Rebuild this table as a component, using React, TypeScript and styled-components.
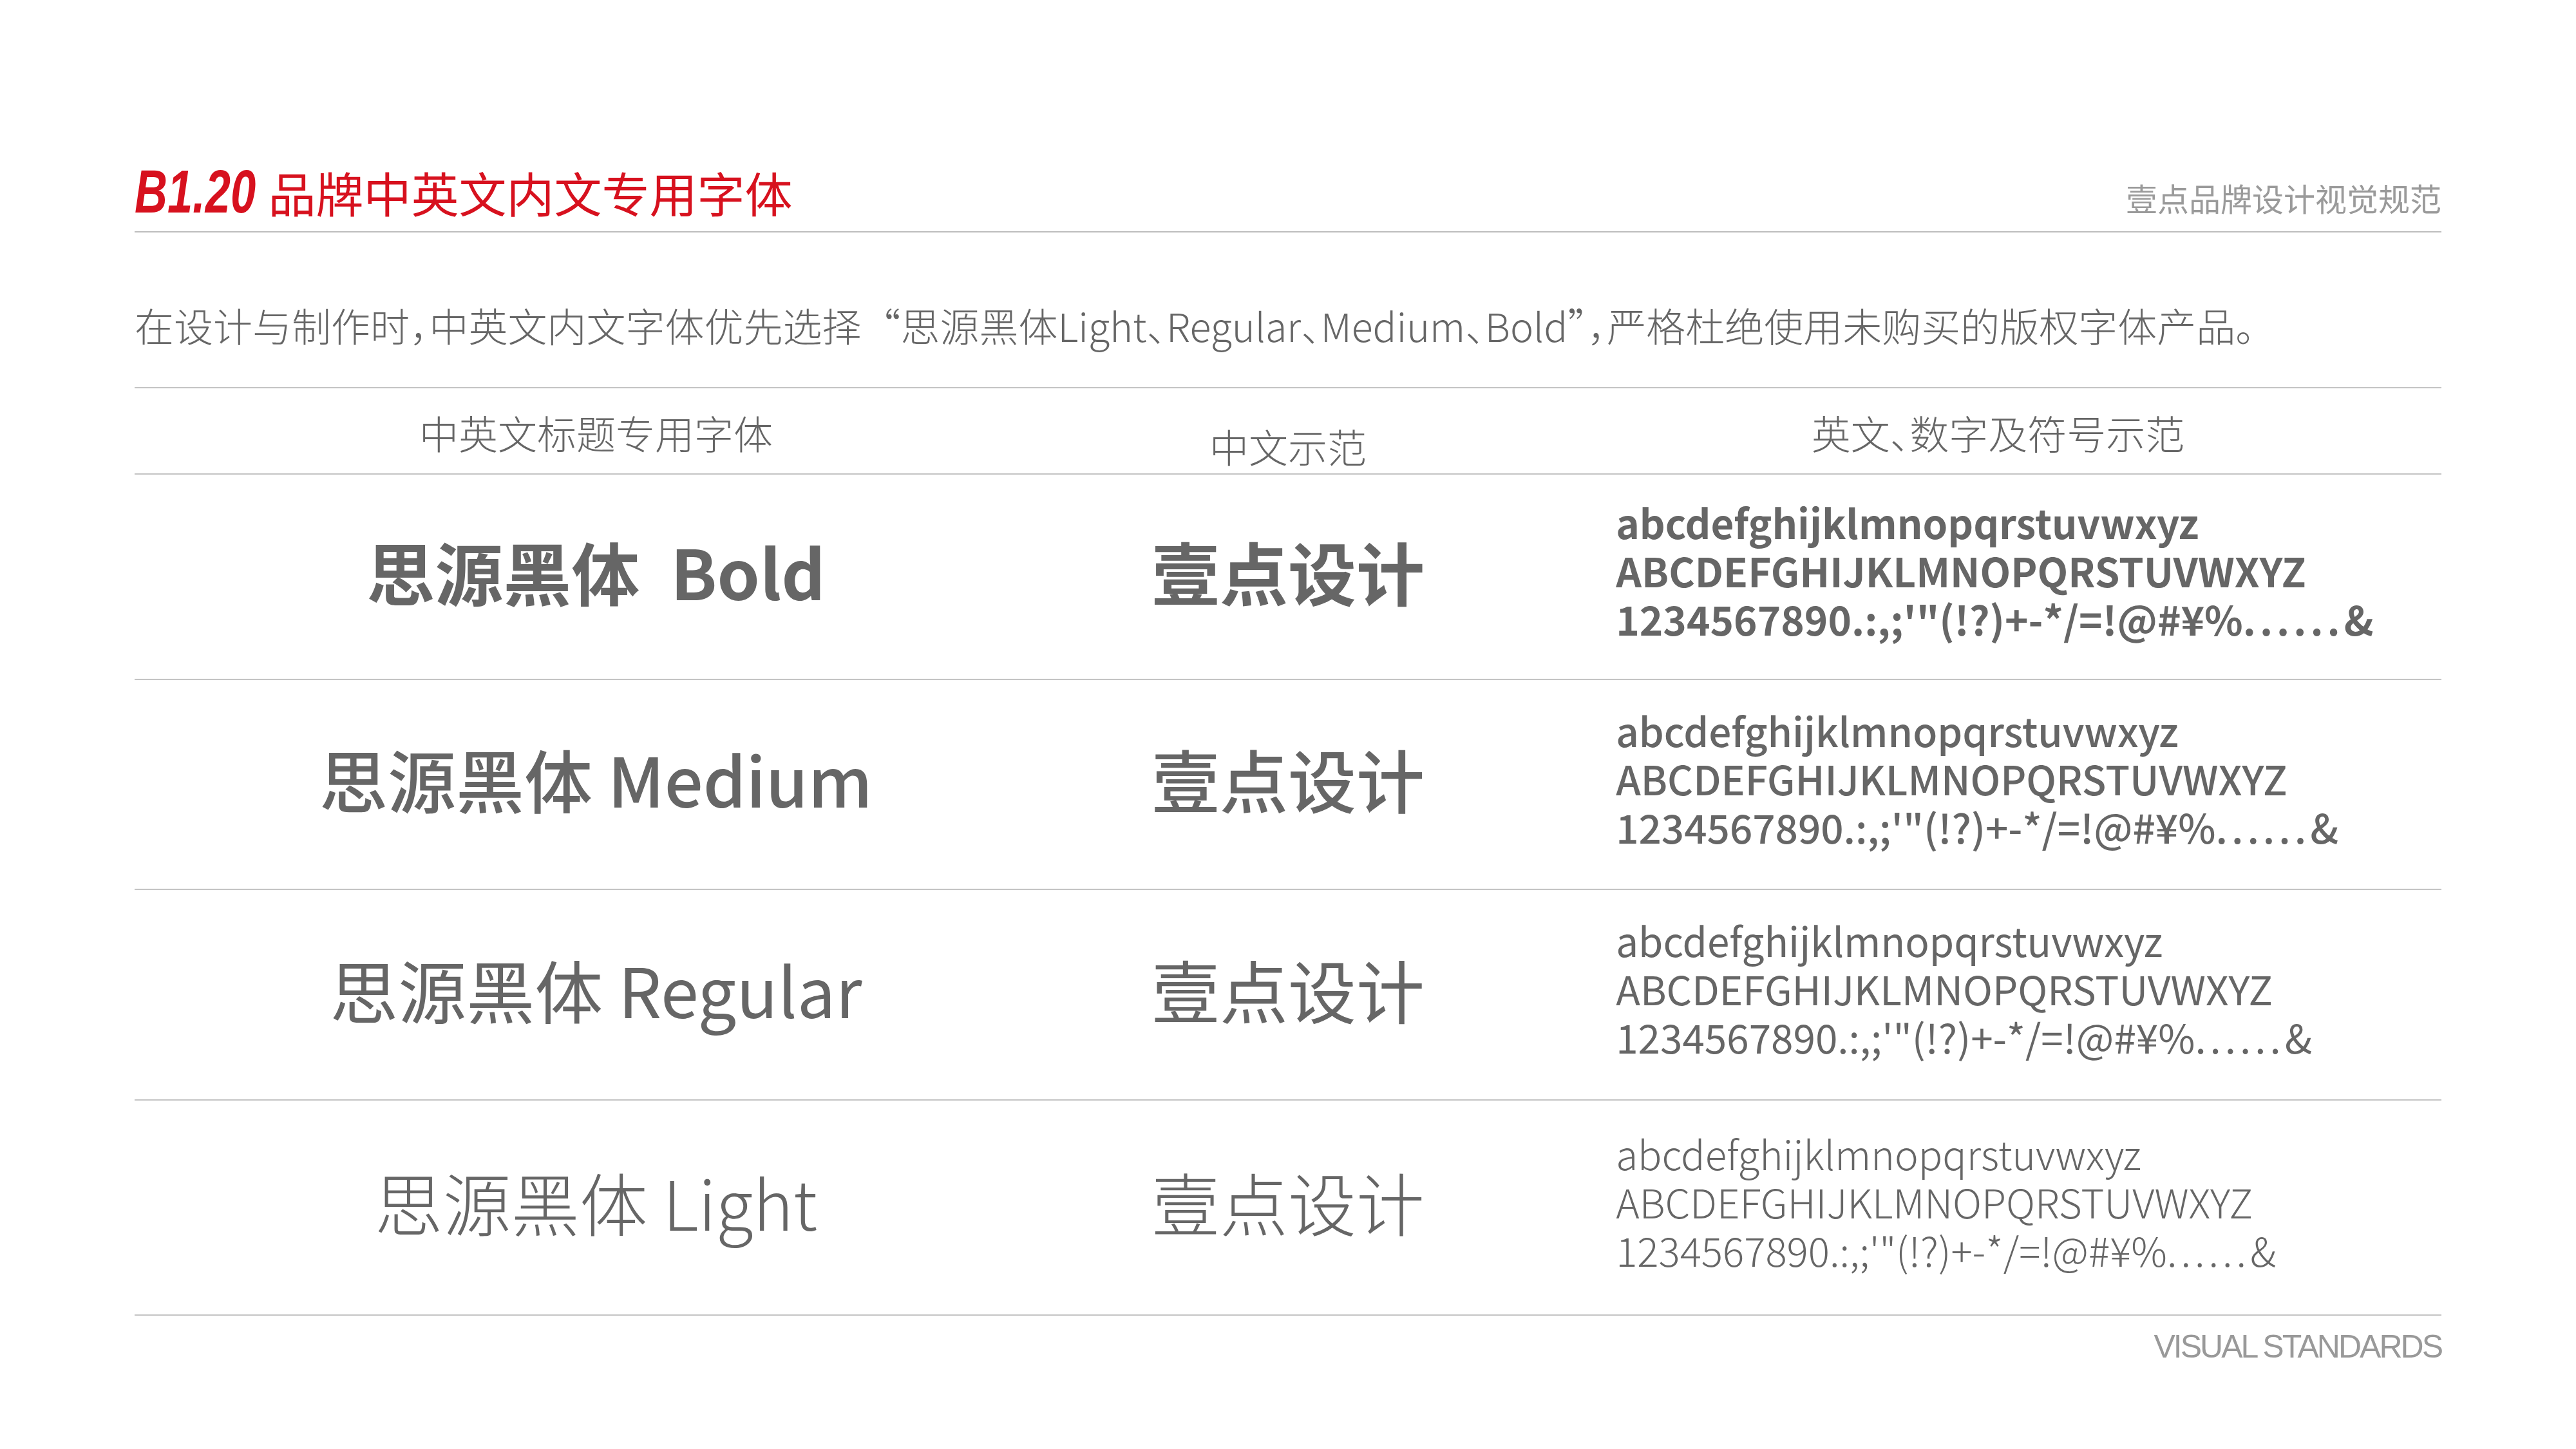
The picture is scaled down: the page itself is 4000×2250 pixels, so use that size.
import styled, { createGlobalStyle } from "styled-components";

const GlobalStyle = createGlobalStyle`
  html, body {
    margin: 0;
    padding: 0;
    background: #ffffff;
  }
  body {
    font-family: "Noto Sans CJK SC", "Noto Sans", sans-serif;
    color: #666666;
  }
`;

const rows = [
  { name: "思源黑体  Bold", weight: 700, height: 319 },
  { name: "思源黑体 Medium", weight: 500, height: 326 },
  { name: "思源黑体 Regular", weight: 400, height: 327 },
  { name: "思源黑体 Light", weight: 300, height: 334 },
];

const App = () => {
  return (
    <>
      <GlobalStyle />
      <Page>
        <Header>
          <TitleGroup>
            <Code>B1.20</Code>
            <Title>品牌中英文内文专用字体</Title>
          </TitleGroup>
          <Brand>壹点品牌设计视觉规范</Brand>
        </Header>

        <Intro>
          在设计与制作时，中英文内文字体优先选择<Quote>“</Quote>思源黑体Light、Regular、Medium、Bold<Quote>”</Quote>，严格杜绝使用未购买的版权字体产品。
        </Intro>

        <Table>
          <HeadRow>
            <HeadCell>中英文标题专用字体</HeadCell>
            <HeadCell $drop={21}>中文示范</HeadCell>
            <HeadCell $shift={56}>英文、数字及符号示范</HeadCell>
          </HeadRow>
          {rows.map((row) => (
            <Row key={row.name} $height={row.height}>
              <FontName $weight={row.weight}>{row.name}</FontName>
              <Sample $weight={row.weight}>壹点设计</Sample>
              <Glyphs $weight={row.weight}>
                <GlyphLine>abcdefghijklmnopqrstuvwxyz</GlyphLine>
                <GlyphLine>ABCDEFGHIJKLMNOPQRSTUVWXYZ</GlyphLine>
                <GlyphLine>
                  1234567890.:,;'"(!?)+-*/=!@#¥%<Dots>......</Dots>&amp;
                </GlyphLine>
              </Glyphs>
            </Row>
          ))}
        </Table>

        <Footer>VISUAL STANDARDS</Footer>
      </Page>
    </>
  );
};

const Page = styled.div`
  width: 4000px;
  height: 2250px;
  box-sizing: border-box;
  padding: 0 209px;
  background: #ffffff;
  display: flex;
  flex-direction: column;
`;

const Header = styled.header`
  height: 361px;
  box-sizing: border-box;
  border-bottom: 2px solid #bdbdbd;
  display: flex;
  align-items: flex-end;
  justify-content: space-between;
  padding-bottom: 14px;
`;

const TitleGroup = styled.div`
  display: flex;
  align-items: baseline;
`;

const Code = styled.span`
  display: inline-block;
  font-family: "Liberation Sans", Arial, sans-serif;
  font-weight: 700;
  font-style: italic;
  font-size: 95px;
  line-height: 1;
  color: #d7111e;
  transform: scaleX(0.742);
  transform-origin: left bottom;
  margin-right: -46px;
`;

const Title = styled.span`
  font-size: 74px;
  line-height: 1;
  color: #d7111e;
  font-weight: 400;
`;

const Brand = styled.span`
  font-size: 49px;
  line-height: 1;
  color: #9a9a9a;
  font-weight: 400;
  padding-bottom: 14px;
`;

const Intro = styled.p`
  margin: 0;
  height: 240px;
  box-sizing: border-box;
  padding-top: 113px;
  font-size: 61px;
  line-height: 61px;
  font-weight: 300;
  color: #666666;
  white-space: nowrap;
  font-feature-settings: "halt";
`;

const Quote = styled.span`
  font-feature-settings: normal;
`;

const Table = styled.div`
  border-top: 2px solid #c4c4c4;
  display: flex;
  flex-direction: column;
`;

const HeadRow = styled.div`
  height: 134px;
  box-sizing: border-box;
  border-bottom: 2px solid #c4c4c4;
  display: grid;
  grid-template-columns: 40% 20% 40%;
`;

const HeadCell = styled.div<{ $drop?: number; $shift?: number }>`
  text-align: center;
  font-size: 61px;
  line-height: 61px;
  font-weight: 300;
  color: #666666;
  font-feature-settings: "halt";
  padding-top: ${(p) => 38 + (p.$drop ?? 0)}px;
  padding-left: ${(p) => (p.$shift ?? 0)}px;
`;

const Row = styled.div<{ $height: number }>`
  height: ${(p) => p.$height}px;
  box-sizing: border-box;
  padding-bottom: 20px;
  border-bottom: 2px solid #c4c4c4;
  display: grid;
  grid-template-columns: 40% 20% 40%;
  align-items: center;
`;

const FontName = styled.div<{ $weight: number }>`
  text-align: center;
  font-size: 106px;
  line-height: 1;
  font-weight: ${(p) => p.$weight};
  color: #666666;
  white-space: pre;
`;

const Sample = styled.div<{ $weight: number }>`
  text-align: center;
  font-size: 106px;
  line-height: 1;
  font-weight: ${(p) => p.$weight};
  color: #666666;
`;

const Glyphs = styled.div<{ $weight: number }>`
  display: flex;
  flex-direction: column;
  padding-left: 151px;
  font-size: 62px;
  font-weight: ${(p) => p.$weight};
  color: #666666;
  white-space: nowrap;
`;

const GlyphLine = styled.div`
  height: 75px;
  line-height: 75px;
`;

const Dots = styled.span`
  letter-spacing: 6px;
`;

const Footer = styled.div`
  margin-top: 23px;
  text-align: right;
  font-family: "Liberation Sans", Arial, sans-serif;
  font-size: 50px;
  line-height: 1;
  letter-spacing: -3px;
  color: #999999;
`;

export default App;
